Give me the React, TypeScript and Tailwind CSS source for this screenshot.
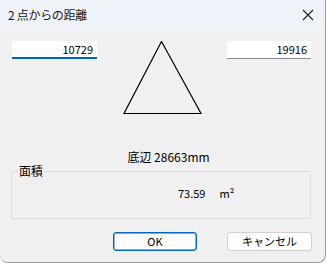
import React from "react";

export default function App() {
  const font = { fontFamily: '"Noto Sans CJK JP", "Noto Sans", sans-serif' };
  return (
    <div className="w-[326px] h-[264px] bg-white" style={font}>
      <div className="w-[326px] h-[263px] bg-[#f0f0f0] border-r border-b border-[#9a9a9a] rounded-bl-[8px] rounded-br-[8px] overflow-hidden flex flex-col">
        {/* title bar */}
        <div className="h-[30px] bg-[#eef2f9] flex items-center justify-between pl-[8px] pr-[10px] shrink-0">
          <span className="text-[12px] leading-none text-[#1a1a1a] tracking-[-0.3px]">2 点からの距離</span>
          <svg width="12" height="12" viewBox="0 0 12 12" className="mr-[1px]">
            <path d="M1 1 L11 11 M11 1 L1 11" stroke="#222" strokeWidth="1.1" />
          </svg>
        </div>
        {/* top row */}
        <div className="flex items-start pl-[12px] mt-[11px]">
          <div className="w-[85px] h-[18px] bg-white border-b-2 border-[#0067c0] flex items-center justify-end pr-[4px] text-[11px] leading-none text-black">
            10729
          </div>
          <svg width="80" height="74" viewBox="0 0 80 74" className="ml-[26px]">
            <path d="M38.5 0.5 L1 72.5 L78 72.5 Z" fill="none" stroke="#000" strokeWidth="1.2" />
          </svg>
          <div className="ml-[24px] w-[84px] h-[18px] bg-white border-b border-[#8a8a8a] flex items-center justify-end pr-[4px] text-[11px] leading-none text-black">
            19916
          </div>
        </div>
        {/* base */}
        <div className="mt-[35px] flex justify-center pl-[12px] text-[12px] leading-[14px] text-black">
          底辺 28663mm
        </div>
        {/* group */}
        <fieldset className="mx-[11px] mt-[1px] w-[300px] h-[54px] border border-[#dcdcdc] px-[6px]">
          <legend className="px-[1px] text-[12px] leading-[12px] text-black">面積</legend>
          <div className="flex items-center pl-[160px] mt-[11px] text-[11px] leading-none text-black">
            <span>73.59</span>
            <span className="ml-[14px]">m²</span>
          </div>
        </fieldset>
        {/* buttons */}
        <div className="flex mt-[13px] pl-[113px] gap-[30px]">
          <button className="w-[84px] h-[19px] bg-[#fdfdfd] border border-[#0067c0] rounded-[3px] text-[11px] leading-none text-black flex items-center justify-center" style={{ boxShadow: "inset 0 0 0 0.5px #0067c0" }}>
            OK
          </button>
          <button className="w-[85px] h-[19px] bg-[#fdfdfd] border border-[#d0d0d0] rounded-[3px] text-[11px] leading-none text-black flex items-center justify-center">
            キャンセル
          </button>
        </div>
      </div>
    </div>
  );
}
